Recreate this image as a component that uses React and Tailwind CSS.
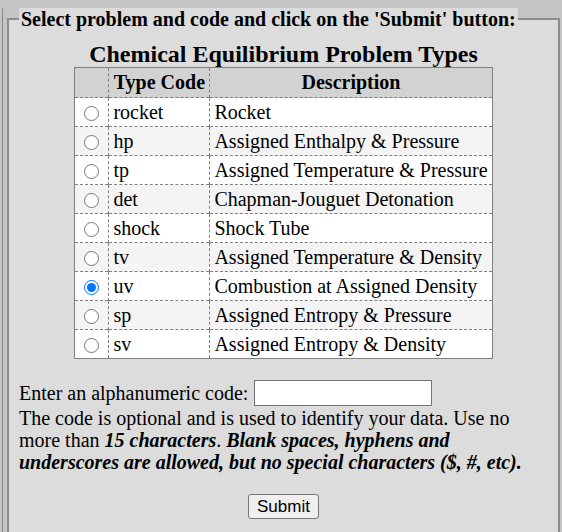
import React, { useState } from 'react';

const rows = [
  ['rocket', 'Rocket'],
  ['hp', 'Assigned Enthalpy & Pressure'],
  ['tp', 'Assigned Temperature & Pressure'],
  ['det', 'Chapman-Jouguet Detonation'],
  ['shock', 'Shock Tube'],
  ['tv', 'Assigned Temperature & Density'],
  ['uv', 'Combustion at Assigned Density'],
  ['sp', 'Assigned Entropy & Pressure'],
  ['sv', 'Assigned Entropy & Density'],
];

const App = () => {
  const [problem, setProblem] = useState('uv');
  const [code, setCode] = useState('');

  return (
    <div className="h-[532px] overflow-hidden bg-[#c4c4c4] pl-[2px] text-black" style={{ fontFamily: '"Liberation Serif", "Times New Roman", serif' }}>
      <div className="mt-[19px] h-full border-l border-[#8a8a8a]">
        <fieldset className="-mt-[11px] ml-[4px] mr-[2px] border-2 border-[#8c8c8c] bg-[#dcdcdc] px-[10px] pb-6">
          <legend className="bg-[#dcdcdc] px-[2px] text-[20px] font-bold leading-[22px]">
            Select problem and code and click on the 'Submit' button:
          </legend>

          <h2 className="mt-[11px] text-center text-[24px] font-bold leading-[26px]">Chemical Equilibrium Problem Types</h2>

          <table className="mx-auto border-collapse border border-[#808080] text-[20px] leading-[23px]">
            <thead>
              <tr className="bg-[#d2d2d2] h-[30px]">
                <th className="w-[34px] border-r border-dashed border-[#808080]"></th>
                <th className="w-[101px] border-r border-dashed border-[#808080] px-[4px] font-bold">Type Code</th>
                <th className="w-[281px] px-[4px] font-bold">Description</th>
              </tr>
            </thead>
            <tbody>
              {rows.map(([c, d], i) => (
                <tr key={c} className={`h-[29px] border-t border-dashed border-[#808080] ${i % 2 ? 'bg-[#f4f4f4]' : 'bg-white'}`}>
                  <td className="border-r border-dashed border-[#808080] text-center align-middle">
                    <input
                      type="radio"
                      name="problem"
                      checked={problem === c}
                      onChange={() => setProblem(c)}
                      className="m-0 h-[15px] w-[15px] align-middle accent-[#0075ff]"
                    />
                  </td>
                  <td className="border-r border-dashed border-[#808080] px-[4px]">{c}</td>
                  <td className="px-[4px] whitespace-nowrap">{d}</td>
                </tr>
              ))}
            </tbody>
          </table>

          <div className="mt-[21px] text-[20px] leading-[23px]">
            <div className="flex items-center">
              <span>Enter an alphanumeric code:</span>
              <input
                value={code}
                onChange={(e) => setCode(e.target.value)}
                className="ml-[6px] h-[26px] w-[178px] border border-[#767676] bg-white"
              />
            </div>
            <p className="mt-[1px] leading-[22px]">
              The code is optional and is used to identify your data. Use no more than{' '}
              <b><i>15 characters</i></b>. <b><i>Blank spaces, hyphens and underscores are allowed, but no special characters ($, #, etc).</i></b>
            </p>
          </div>

          <div className="mt-[21px] flex justify-center">
            <button
              className="h-[25px] w-[71px] rounded-[3px] border border-[#767676] bg-[#efefef] text-[17px] leading-none"
              style={{ fontFamily: '"Liberation Sans", Arial, sans-serif' }}
            >
              Submit
            </button>
          </div>
        </fieldset>
      </div>
    </div>
  );
};

export default App;
